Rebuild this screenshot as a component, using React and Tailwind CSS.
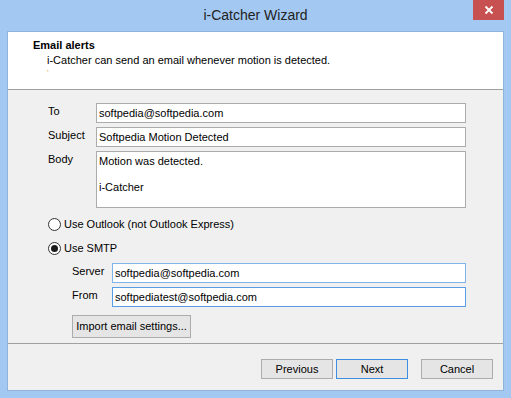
import React from 'react';

const font = { fontFamily: '"Liberation Sans", Arial, sans-serif' };

const Field = ({ value, width = 'w-[370px]', border = 'border-[#ababab]' }) => (
  <div className={`h-[20px] ${width} border ${border} bg-white px-[2px] text-[11px] leading-[18px] text-black whitespace-nowrap`}>
    {value}
  </div>
);

const Radio = ({ checked, label }) => (
  <div className="flex items-center gap-[3px] h-[16px]">
    <div className="w-[13px] h-[13px] rounded-full border border-[#333] bg-white flex items-center justify-center">
      {checked && <div className="w-[7px] h-[7px] rounded-full bg-[#1a1a1a]" />}
    </div>
    <span className="text-[11px] text-black">{label}</span>
  </div>
);

const Btn = ({ children, active }) => (
  <button
    className={`w-[72px] h-[20px] text-[11px] text-black bg-[#e5e5e5] border ${
      active ? 'border-[#3c8fe0]' : 'border-[#acacac]'
    }`}
  >
    {children}
  </button>
);

export default function App() {
  return (
    <div style={font} className="w-[511px] h-[398px] bg-[#a3c9f3] flex flex-col overflow-hidden">
      {/* title bar */}
      <div className="h-[31px] flex items-start relative">
        <div className="flex-1 text-center text-[14px] leading-[30px] text-[#222]">i-Catcher Wizard</div>
        <div className="absolute right-[7px] top-0 w-[31px] h-[20px] bg-[#c75050] flex items-center justify-center">
          <svg width="10" height="10" viewBox="0 0 10 10">
            <path d="M1.5 1.5 L8.5 8.5 M8.5 1.5 L1.5 8.5" stroke="white" strokeWidth="1.8" />
          </svg>
        </div>
      </div>

      {/* client area */}
      <div className="mx-[7px] mb-[7px] h-[360px] border border-[#8fb3d9] bg-[#f0f0f0] flex flex-col">
        <div className="h-[58px] shrink-0 bg-white border-b border-[#a0a0a0] pl-[25px] pt-[6px]">
          <div className="text-[11px] font-bold text-black leading-[15px]">Email alerts</div>
          <div className="pl-[14px] text-[11px] text-black leading-[15px]">
            i-Catcher can send an email whenever motion is detected.
          </div>
          <div className="pl-[14px] text-[8px] leading-[10px] text-[#d08a3a]">'</div>
        </div>

        <div className="flex-1 pl-[40px] pt-[13px] flex flex-col">
          <div className="flex flex-col gap-[4px]">
            <div className="flex">
              <div className="w-[48px] text-[11px] leading-[16px]">To</div>
              <Field value="softpedia@softpedia.com" />
            </div>
            <div className="flex">
              <div className="w-[48px] text-[11px] leading-[16px]">Subject</div>
              <Field value="Softpedia Motion Detected" />
            </div>
            <div className="flex">
              <div className="w-[48px] text-[11px] leading-[16px]">Body</div>
              <div className="h-[57px] w-[370px] border border-[#ababab] bg-white px-[2px] pt-[3px] text-[11px] leading-[13px] text-black">
                <div>Motion was detected.</div>
                <div className="h-[13px]" />
                <div>i-Catcher</div>
              </div>
            </div>
          </div>

          <div className="mt-[8px] flex flex-col gap-[8px]">
            <Radio label="Use Outlook (not Outlook Express)" />
            <Radio checked label="Use SMTP" />
          </div>

          <div className="pl-[24px] mt-[7px] flex flex-col gap-[4px]">
            <div className="flex">
              <div className="w-[40px] text-[11px] leading-[16px]">Server</div>
              <Field value="softpedia@softpedia.com" width="w-[354px]" border="border-[#7eb4ea]" />
            </div>
            <div className="flex">
              <div className="w-[40px] text-[11px] leading-[16px]">From</div>
              <Field value="softpediatest@softpedia.com" width="w-[354px]" border="border-[#569de5]" />
            </div>
            <div className="mt-[2px]">
              <button className="w-[119px] h-[23px] whitespace-nowrap text-[11px] text-black bg-[#e5e5e5] border border-[#acacac]">
                Import email settings...
              </button>
            </div>
          </div>
        </div>

        <div className="h-[47px] shrink-0 border-t border-[#a0a0a0] flex items-start justify-end pr-[10px] pt-[15px]">
          <div className="flex">
            <Btn>Previous</Btn>
            <div className="w-[3px]" />
            <Btn active>Next</Btn>
            <div className="w-[13px]" />
            <Btn>Cancel</Btn>
          </div>
        </div>
      </div>
    </div>
  );
}
